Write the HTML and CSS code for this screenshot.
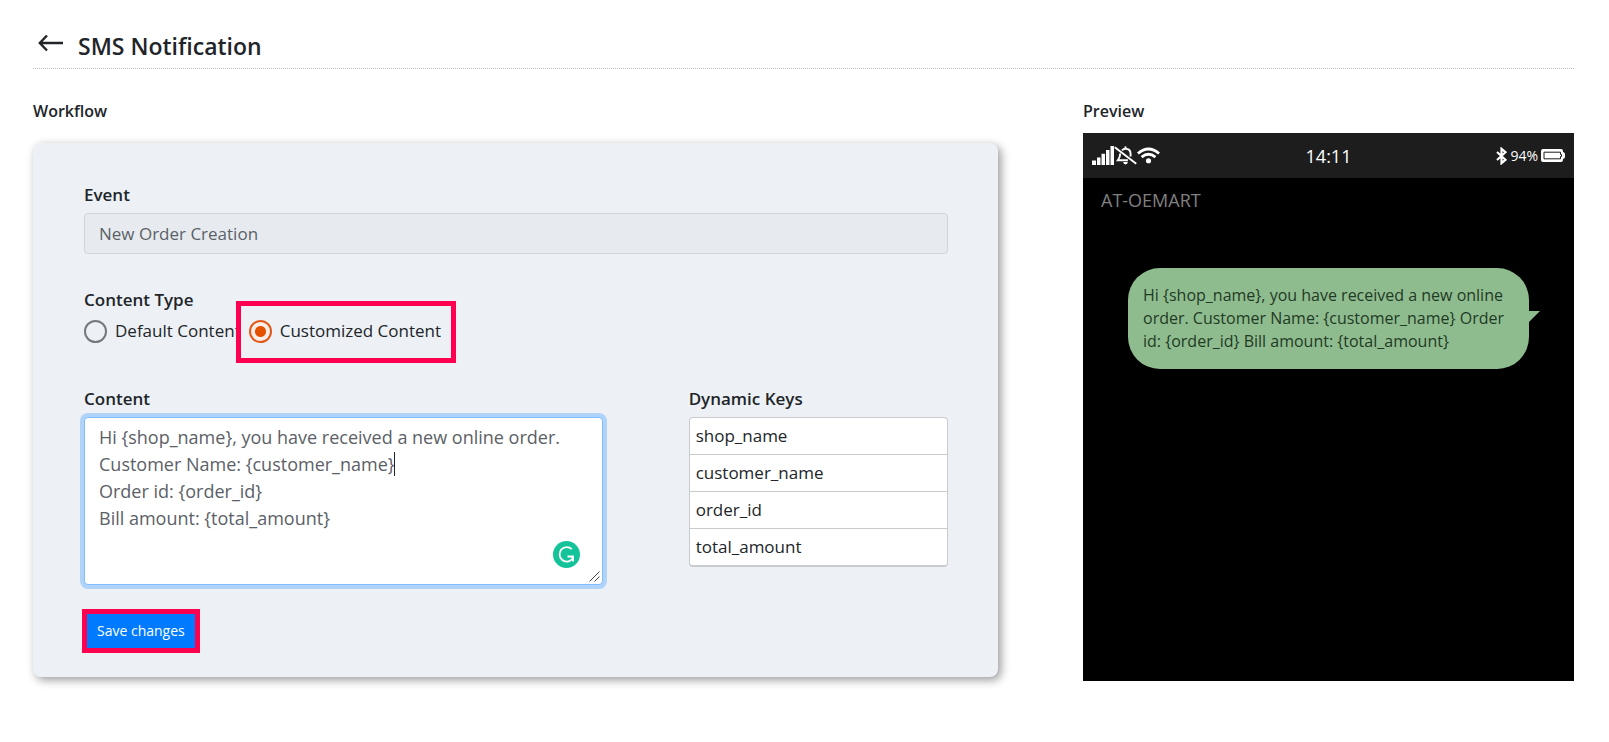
FILE: index.html
```html
<!DOCTYPE html>
<html lang="en">
<head>
<meta charset="utf-8">
<title>SMS Notification</title>
<link rel="stylesheet" href="styles.css">
</head>
<body>
<main class="page">
  <header class="page-header">
    <a class="back" href="#" aria-label="Back">
      <svg width="26" height="18" viewBox="0 0 26 18" fill="none" stroke="currentColor" stroke-width="2.400"><path d="M25 9H2M9 1.500L1.800 9L9 16.500"/></svg>
    </a>
    <h1>SMS Notification</h1>
  </header>
  <div class="columns">
    <section>
      <h2>Workflow</h2>
      <form class="card">
        <div class="field event">
          <label for="event">Event</label>
          <input class="event-input" id="event" type="text" value="New Order Creation" disabled>
        </div>
        <fieldset class="types">
          <legend>Content Type</legend>
          <div class="options">
            <label class="option"><input type="radio" name="type">Default Content</label>
            <label class="option highlight"><input type="radio" name="type" checked>Customized Content</label>
          </div>
        </fieldset>
        <div class="editor">
          <div class="field">
            <label for="content">Content</label>
            <div class="textarea-wrap">
              <textarea id="content" spellcheck="false">Hi {shop_name}, you have received a new online order.
Customer Name: {customer_name}
Order id: {order_id}
Bill amount: {total_amount}</textarea>
              <span class="caret"></span>
              <svg class="checker" width="27" height="27" viewBox="0 0 27 27"><circle cx="13.500" cy="13.500" r="13.500" fill="#15c39a"/><path d="M18.800 8.200A7.200 7.200 0 1 0 19.300 18" fill="none" stroke="#fff" stroke-width="1.800"/><path d="M14.500 15.500H20V20.500" fill="none" stroke="#fff" stroke-width="1.800"/><path d="M17 15h3.800v5z" fill="#fff"/></svg>
              <svg class="grip" width="11" height="11" viewBox="0 0 11 11" stroke="#444" stroke-width="1"><path d="M.5 10.500l10-10M5.500 10.500l5-5"/></svg>
            </div>
          </div>
          <div class="field">
            <h3>Dynamic Keys</h3>
            <ul class="keys">
              <li>shop_name</li>
              <li>customer_name</li>
              <li>order_id</li>
              <li>total_amount</li>
            </ul>
          </div>
        </div>
        <button class="save" type="button">Save changes</button>
      </form>
    </section>
    <section class="preview">
      <h2>Preview</h2>
      <div class="phone">
        <div class="status">
          <div class="status-left">
            <svg width="22" height="19" viewBox="0 0 22 19" fill="#fff"><path d="M0 14.500h4V19H0zM5 11.500h3.500V19H5zM9.500 7.800H13V19H9.500zM14 4h3.500v15H14zM18.500 0H22v19h-3.500z"/></svg>
            <svg width="23" height="19" viewBox="0 0 24 19" fill="none" stroke="#fff" stroke-width="2"><path d="M.8.800L23.200 18.200"/><path d="M8.300 4.200Q10 2.500 12 2.500C16 2.500 17.300 5.500 17.300 8V10.500M6.500 7.500C6.500 11 5.500 12.500 4 14.500H14.500"/><path d="M12 0v2.500"/><path d="M9.500 16.300h5Q14 18.800 12 18.800T9.500 16.300z" fill="#fff" stroke="none"/></svg>
            <svg width="23" height="17" viewBox="0 0 24 17" fill="none" stroke="#fff" stroke-width="3"><path d="M1 6.400Q12-3 23 6.400M4.800 10.200Q12 4.200 19.200 10.200"/><circle cx="12" cy="14" r="2.700" fill="#fff" stroke="none"/></svg>
          </div>
          <div class="clock">14:11</div>
          <div class="status-right">
            <svg width="11" height="18" viewBox="0 0 11 18" fill="none" stroke="#fff" stroke-width="2.200"><path d="M1 5L9.500 12.800L5.500 16.200V1.800L9.500 5.200L1 13"/></svg>
            <span>94%</span>
            <svg width="24" height="13" viewBox="0 0 24 13"><path d="M2 0H20Q22 0 22 2V3Q24 3.500 24 5V8Q24 9.500 22 10V11Q22 13 20 13H2Q0 13 0 11V2Q0 0 2 0z" fill="#fff"/><path d="M3 3.200H19.500V5.500H20.500V7.500H19.500V9.800H3z" fill="none" stroke="#1d1d1d" stroke-width="1"/></svg>
          </div>
        </div>
        <div class="sender">AT-OEMART</div>
        <div class="bubble">Hi {shop_name}, you have received a new online order. Customer Name: {customer_name} Order id: {order_id} Bill amount: {total_amount}</div>
      </div>
    </section>
  </div>
</main>
</body>
</html>
```
FILE: styles.css
```css
* {
  box-sizing: border-box;
}

body {
  margin: 0;
  background: #fff;
  color: #212529;
  font: 17px/24px "Open Sans", sans-serif;
}

h1, h2, h3, ul, fieldset, legend {
  margin: 0;
  padding: 0;
  border: 0;
}

.page {
  padding: 28px 35px 40px 33px;
}

.page-header {
  display: flex;
  align-items: flex-start;
  gap: 14px;
  height: 41px;
  padding-left: 5px;
  border-bottom: 1px dotted #bbb;
}

.back {
  display: flex;
  padding-top: 6px;
  color: #212529;
}

h1 {
  font-size: 23px;
  line-height: 36px;
  font-weight: 600;
}

.columns {
  display: grid;
  grid-template-columns: 965fr 491fr;
  column-gap: 85px;
  margin-top: 30px;
}

h2 {
  font-size: 16px;
  line-height: 24px;
  font-weight: 600;
}

.card {
  margin-top: 20px;
  padding: 40px 50px 24px 51px;
  border-radius: 8px;
  background: #edf1f6;
  box-shadow: 3px 3px 10px rgba(0, 0, 0, 0.4);
}

.field > label,
h3,
legend {
  display: block;
  font-size: 17px;
  line-height: 24px;
  font-weight: 600;
}

.event-input {
  display: block;
  width: 100%;
  height: 41px;
  margin-top: 6px;
  padding: 0 14px;
  border: 1px solid #ced4da;
  border-radius: 4px;
  background: #e7ebef;
  color: #5b6167;
  font: inherit;
}

.types {
  margin-top: 34px;
}

.options {
  display: flex;
  align-items: flex-start;
}

.option {
  display: flex;
  align-items: center;
  gap: 8px;
  height: 38px;
  white-space: nowrap;
}

.option input {
  flex: none;
  width: 23px;
  height: 23px;
  margin: 0;
  appearance: none;
  border: 2px solid #74777b;
  border-radius: 50%;
}

.option input:checked {
  border-color: #e0591b;
  background: radial-gradient(circle, #e65100 5px, #fbeee8 6px);
}

.highlight {
  height: 62px;
  margin: -11px 0 -13px -5px;
  padding: 0 10px 2px 8px;
  border: 5px solid #ff0050;
}

.editor {
  display: grid;
  grid-template-columns: 518fr 259fr;
  column-gap: 86px;
  margin-top: 37px;
}

.textarea-wrap {
  position: relative;
  margin-top: 6px;
}

textarea {
  display: block;
  width: 100%;
  height: 168px;
  padding: 6px 14px;
  border: 1px solid #80bdff;
  border-radius: 4px;
  outline: 0;
  background: #fff;
  box-shadow: 0 0 0 4px #b0d3f9;
  color: #5b6167;
  font: 18px/27px "Open Sans", sans-serif;
}

textarea::-webkit-resizer {
  background: transparent;
}

.caret {
  position: absolute;
  left: 310px;
  top: 35px;
  width: 1px;
  height: 24px;
  background: #212529;
}

.checker {
  position: absolute;
  right: 23px;
  bottom: 17px;
}

.grip {
  position: absolute;
  right: 3px;
  bottom: 3px;
  pointer-events: none;
}

.keys {
  margin-top: 6px;
  border: 1px solid #c8cacc;
  border-bottom-width: 2px;
  border-radius: 4px;
  background: #fff;
  list-style: none;
}

.keys li {
  padding: 6px;
}

.keys li + li {
  border-top: 1px solid #c8cacc;
}

.save {
  display: block;
  height: 44px;
  margin: 24px 0 0 -2px;
  padding: 0 10px;
  border: 5px solid #ff0050;
  background: #007bff;
  color: #fff;
  font: 14px/20px "Open Sans", sans-serif;
}

.preview {
  display: flex;
  flex-direction: column;
}

.phone {
  flex: 1;
  margin: 10px 0 -4px;
  background: #000;
}

.status {
  display: grid;
  grid-template-columns: 1fr auto 1fr;
  align-items: center;
  height: 45px;
  padding: 0 9px;
  background: #1d1d1d;
  color: #fff;
}

.status-left,
.status-right {
  display: flex;
  align-items: center;
}

.status-right {
  justify-content: flex-end;
  gap: 3px;
  font-size: 14px;
}

.clock {
  font-size: 18px;
}

.sender {
  padding: 10px 18px 12px;
  color: #808080;
  font-size: 18px;
}

.bubble {
  position: relative;
  margin: 44px 45px 0;
  padding: 16px 15px;
  border-radius: 32px;
  background: #8fbc8f;
  color: #1f3a24;
  font-size: 16px;
  line-height: 23px;
}

.bubble::after {
  content: "";
  position: absolute;
  left: 100%;
  top: 43px;
  border-top: 11px solid #8fbc8f;
  border-right: 11px solid transparent;
}
```
